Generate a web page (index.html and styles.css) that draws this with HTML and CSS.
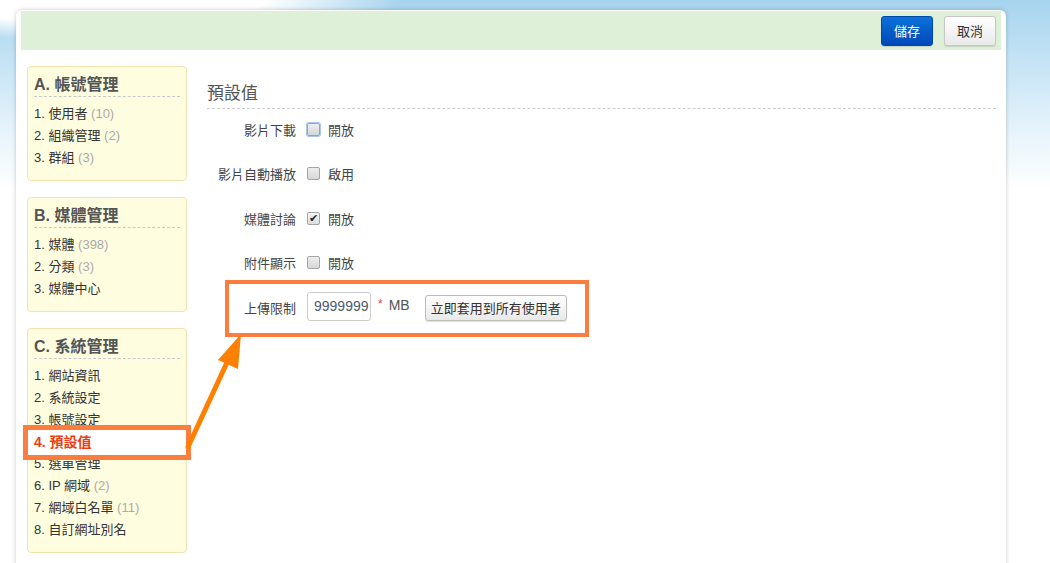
FILE: index.html
```html
<!DOCTYPE html>
<html lang="zh-Hant">
<head>
<meta charset="utf-8">
<title>預設值</title>
<link rel="stylesheet" href="styles.css">
</head>
<body>
<div class="panel">
  <div class="toolbar">
    <button class="btn btn-primary">儲存</button>
    <button class="btn">取消</button>
  </div>
  <div class="layout">
    <aside class="sidebar">
      <section class="box">
        <h3 class="box-title">A. 帳號管理</h3>
        <ul class="menu">
          <li>1. 使用者 <span class="count">(10)</span></li>
          <li>2. 組織管理 <span class="count">(2)</span></li>
          <li>3. 群組 <span class="count">(3)</span></li>
        </ul>
      </section>
      <section class="box">
        <h3 class="box-title">B. 媒體管理</h3>
        <ul class="menu">
          <li>1. 媒體 <span class="count">(398)</span></li>
          <li>2. 分類 <span class="count">(3)</span></li>
          <li>3. 媒體中心</li>
        </ul>
      </section>
      <section class="box box-c">
        <h3 class="box-title">C. 系統管理</h3>
        <ul class="menu">
          <li>1. 網站資訊</li>
          <li>2. 系統設定</li>
          <li>3. 帳號設定</li>
          <li class="active"><span class="active-text">4. 預設值</span></li>
          <li>5. 選單管理</li>
          <li>6. IP 網域 <span class="count">(2)</span></li>
          <li>7. 網域白名單 <span class="count">(11)</span></li>
          <li>8. 自訂網址別名</li>
        </ul>
      </section>
    </aside>
    <main class="content">
      <h2 class="page-title">預設值</h2>
      <div class="form">
        <div class="row">
          <span class="label">影片下載</span>
          <span class="cb cb-focus"></span>
          <span class="opt">開放</span>
        </div>
        <div class="row">
          <span class="label">影片自動播放</span>
          <span class="cb"></span>
          <span class="opt">啟用</span>
        </div>
        <div class="row">
          <span class="label">媒體討論</span>
          <span class="cb cb-checked">✔</span>
          <span class="opt">開放</span>
        </div>
        <div class="row">
          <span class="label">附件顯示</span>
          <span class="cb"></span>
          <span class="opt">開放</span>
        </div>
        <div class="row">
          <span class="label">上傳限制</span>
          <span class="input">9999999</span>
          <span class="req">*</span>
          <span class="unit">MB</span>
          <button class="btn btn-apply">立即套用到所有使用者</button>
        </div>
      </div>
    </main>
  </div>
  <div class="callout"></div>
  <svg class="arrow" width="990" height="553" viewBox="0 0 990 553">
    <line x1="172" y1="437" x2="214" y2="346" stroke="#ff8000" stroke-width="5" stroke-linecap="round"/>
    <polygon points="225,324 202,350 222,359" fill="#ff8000"/>
  </svg>
</div>
</body>
</html>
```
FILE: styles.css
```css
html, body {
  margin: 0;
  padding: 0;
  height: 100%;
  overflow: hidden;
}
body {
  font-family: "Liberation Sans", "Noto Sans CJK TC", Arial, sans-serif;
  font-size: 13px;
  color: #333;
  background:
    radial-gradient(ellipse 300px 40px at 100px 0, #ffffff 55%, rgba(255,255,255,0) 100%),
    linear-gradient(to bottom, #a7d4ee 0, #c4e3f5 60px, #e6f3fb 130px, #ffffff 190px);
}
.panel {
  position: relative;
  margin: 10px 0 0 16px;
  width: 990px;
  height: 600px;
  background: #fff;
  border-radius: 6px 6px 0 0;
  box-shadow: 0 0 4px rgba(0,0,0,0.22);
  padding-top: 1px;
  box-sizing: border-box;
}
.toolbar {
  margin: 0 5px;
  height: 39px;
  background: #dff0d8;
  display: flex;
  justify-content: flex-end;
  align-items: center;
  gap: 11px;
  padding-right: 5px;
}
.btn {
  font-family: "Liberation Sans", "Noto Sans CJK TC", Arial, sans-serif;
  font-size: 13px;
  height: 30px;
  width: 52px;
  border-radius: 3px;
  border: 1px solid #c6c6c6;
  background: linear-gradient(to bottom, #ffffff, #e9e9e9);
  color: #333;
  padding: 0;
  box-shadow: 0 1px 1px rgba(0,0,0,0.12);
  cursor: pointer;
}
.btn-primary {
  color: #fff;
  border-color: #0048a8;
  background: linear-gradient(to bottom, #0b72d8, #0048bb);
}
.layout {
  display: flex;
  padding: 16px 10px 0 11px;
  gap: 20px;
}
.sidebar {
  width: 160px;
  flex: none;
  display: flex;
  flex-direction: column;
  gap: 16px;
}
.box {
  background: #fffde0;
  border: 1px solid #f2e2ae;
  border-radius: 4px;
  padding: 7px 6px 11px;
}
.box-title {
  margin: 0;
  font-size: 16px;
  font-weight: bold;
  color: #555;
  line-height: 22px;
  border-bottom: 1px dashed #c8c8c8;
}
.menu {
  list-style: none;
  margin: 6px 0 0;
  padding: 0;
}
.menu li {
  line-height: 22px;
  height: 22px;
  white-space: nowrap;
}
.count {
  color: #aaa;
}
.menu li.active {
  position: relative;
}
.menu li.active::before {
  content: "";
  position: absolute;
  left: -11px;
  top: -6px;
  width: 168px;
  height: 35px;
  box-sizing: border-box;
  border: 5px solid #fd7d3e;
  background: #fff;
}
.active-text {
  position: relative;
  color: #ee3d12;
  font-weight: bold;
  font-size: 14px;
}
.content {
  flex: 1;
  padding-top: 16px;
}
.page-title {
  margin: 0;
  font-size: 17px;
  font-weight: normal;
  color: #555;
  line-height: 24px;
  padding-bottom: 2px;
  border-bottom: 1px dashed #ccc;
}
.form {
  display: flex;
  flex-direction: column;
  gap: 14.5px;
  padding-top: 5px;
}
.row {
  display: flex;
  align-items: center;
  height: 30px;
}
.label {
  width: 89px;
  text-align: right;
  margin-right: 11px;
  color: #444;
}
.cb {
  width: 11px;
  height: 11px;
  border: 1px solid #a5a5a5;
  border-radius: 2px;
  background: linear-gradient(to bottom, #eeeeee, #d6d6d6);
  margin-right: 8px;
  font-size: 11px;
  line-height: 11px;
  text-align: center;
  color: #222;
  overflow: hidden;
}
.cb-focus {
  border-color: #7ea6e4;
  box-shadow: 0 0 0 1px #a9c6f0;
}
.cb-checked {
  background: linear-gradient(to bottom, #f4f4f4, #dcdcdc);
}
.opt {
  color: #444;
}
.input {
  width: 64px;
  height: 29px;
  box-sizing: border-box;
  border: 1px solid #ccc;
  border-radius: 3px;
  font-size: 14px;
  line-height: 27px;
  padding-left: 6px;
  color: #4e5a70;
  margin-top: -2px;
}
.req {
  color: #ee4444;
  margin-left: 7px;
  margin-right: 6px;
  font-size: 12px;
  margin-top: -6px;
}
.unit {
  color: #555;
  font-size: 14px;
  margin-top: -4px;
}
.btn-apply {
  width: 142px;
  height: 26px;
  margin-left: 15px;
  margin-top: 1px;
  border-color: #bbb;
}
.callout {
  position: absolute;
  left: 209px;
  top: 270px;
  width: 364px;
  height: 57px;
  box-sizing: border-box;
  border: 4px solid #fd7d3e;
  pointer-events: none;
}
.arrow {
  position: absolute;
  left: 0;
  top: 0;
  pointer-events: none;
}
```
